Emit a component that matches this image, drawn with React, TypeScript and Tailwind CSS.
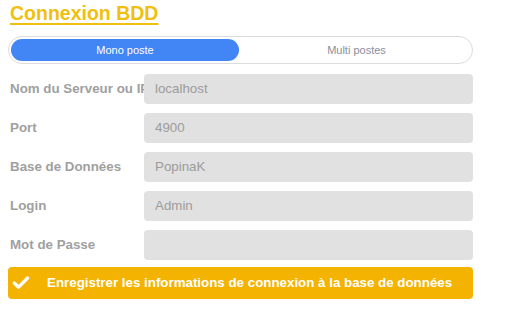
import { Check } from 'lucide-react'

const fields = [
  { label: 'Nom du Serveur ou IP', value: 'localhost' },
  { label: 'Port', value: '4900' },
  { label: 'Base de Données', value: 'PopinaK' },
  { label: 'Login', value: 'Admin' },
  { label: 'Mot de Passe', value: '' },
]

export default function App() {
  return (
    <div className="w-[510px] h-[310px] bg-white pl-2 font-['Liberation_Sans',Arial,sans-serif]">
      <div className="w-[465px]">
        <h1 className="pl-[2px] pt-[1px] h-[36px] text-[19.5px] leading-[24px] font-bold text-[#f0c010] underline underline-offset-[3px] decoration-2">
          Connexion BDD
        </h1>

        <div className="flex h-[28px] p-[2px] rounded-full border border-[#dcdcdc] text-[11px]">
          <button className="w-[228px] rounded-full bg-[#4285f4] text-white">Mono poste</button>
          <button className="flex-1 pl-[4px] text-[#8a8f9e]">Multi postes</button>
        </div>

        <div className="flex flex-col gap-[9px] mt-[10px]">
          {fields.map((f) => (
            <div key={f.label} className="flex items-center h-[30px]">
              <label className="w-[136px] pl-[2px] overflow-hidden whitespace-nowrap text-[13.33px] font-bold text-[#a0a0a0]">
                {f.label}
              </label>
              <div className="flex-1 h-full flex items-center pl-[11px] rounded-[4px] bg-[#e1e1e1] text-[13.33px] text-[#9c9c9c]">
                {f.value}
              </div>
            </div>
          ))}
        </div>

        <button className="mt-[7px] w-full h-[32px] flex items-center pl-[2px] rounded-[4px] bg-[#f4b300] text-white text-[13.33px] font-bold">
          <Check size={20} strokeWidth={4} className="ml-[1px] mr-[16px]" />
          Enregistrer les informations de connexion à la base de données
        </button>
      </div>
    </div>
  )
}
